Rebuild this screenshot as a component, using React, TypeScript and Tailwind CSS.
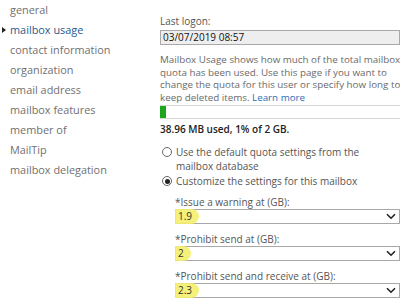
import React from 'react';

const NAV = [
  'general',
  'mailbox usage',
  'contact information',
  'organization',
  'email address',
  'mailbox features',
  'member of',
  'MailTip',
  'mailbox delegation',
];

const Chevron = () => (
  <svg width="10" height="7" viewBox="0 0 10 7" className="shrink-0">
    <path d="M1 1.2 L5 5.2 L9 1.2" fill="none" stroke="#222" strokeWidth="1.6" />
  </svg>
);

// boîte de sélection avec valeur surlignée
const QuotaSelect = ({ label, value }: { label: string; value: string }) => (
  <div>
    <div className="h-[13px] leading-[13px] text-[10px] text-[#555]">{label}</div>
    <div className="h-[15px] border border-[#a8a8a8] bg-white flex items-center pr-[3px]">
      <span className="relative ml-[1px] leading-[13px] text-[10px] text-[#333]">
        <span className="absolute -inset-y-[1px] -left-[2px] -right-[6px] rounded-r-full bg-[#f4ee6a] opacity-90" />
        <span className="relative px-[1px]">{value}</span>
      </span>
      <div className="flex-1" />
      <Chevron />
    </div>
  </div>
);

const Radio = ({ on }: { on?: boolean }) => (
  <span className="mt-[2.5px] w-[10px] h-[10px] rounded-full border border-[#666] flex items-center justify-center shrink-0">
    {on && <span className="w-[5px] h-[5px] rounded-full bg-[#222]" />}
  </span>
);

const INTRO = [
  'Mailbox Usage shows how much of the total mailbox',
  'quota has been used. Use this page if you want to',
  'change the quota for this user or specify how long to',
];

export default function App() {
  return (
    <div
      className="w-[400px] h-[302px] bg-white flex items-start overflow-hidden"
      style={{ fontFamily: '"Segoe UI", "Open Sans", "Noto Sans", sans-serif' }}
    >
      {/* navigation */}
      <div className="w-[160px] shrink-0">
        {NAV.map((n, i) => (
          <div key={n} className="h-[20px] flex items-center relative pl-[10px]">
            {i === 1 && (
              <span className="absolute left-[2px] top-[7px] w-0 h-0 border-y-[3px] border-y-transparent border-l-[4px] border-l-[#222]" />
            )}
            <span className={`text-[10.9px] ${i === 1 ? 'text-[#1d5a8f]' : 'text-[#707070]'}`}>{n}</span>
          </div>
        ))}
      </div>

      {/* contenu */}
      <div className="flex-1 min-w-0 pt-[15px]">
        <div className="h-[13px] leading-[13px] text-[10px] text-[#555]">Last logon:</div>
        <div className="mt-[2px] h-[15px] border border-[#a9a9a9] bg-[#eeeeee] flex items-center pl-[2px] text-[10px] text-[#111]">
          03/07/2019 08:57
        </div>

        <div className="mt-[9px] text-[9.8px] leading-[12.7px] text-[#6a6a6a] whitespace-nowrap">
          {INTRO.map((l) => (
            <div key={l}>{l}</div>
          ))}
          <div>
            keep deleted items. <span className="text-[#2a6db5]">Learn more</span>
          </div>
        </div>

        <div className="h-[14px] border-y border-[#d6d6d6] flex items-stretch">
          <div className="w-[6px] bg-[#1ea51e]" />
        </div>

        <div className="mt-[4px] h-[13px] leading-[13px] text-[10px] font-semibold text-[#222]">
          38.96 MB used, 1% of 2 GB.
        </div>

        <div className="mt-[9px] flex gap-[4px] pl-[2px]">
          <Radio />
          <div className="text-[10px] leading-[14.5px] text-[#555]">
            Use the default quota settings from the
            <br />
            mailbox database
          </div>
        </div>
        <div className="flex gap-[4px] pl-[2px]">
          <Radio on />
          <div className="text-[10px] leading-[14.5px] text-[#555]">Customize the settings for this mailbox</div>
        </div>

        <div className="mt-[8px] pl-[15px] flex flex-col gap-[9px]">
          <QuotaSelect label="*Issue a warning at (GB):" value="1.9" />
          <QuotaSelect label="*Prohibit send at (GB):" value="2" />
          <QuotaSelect label="*Prohibit send and receive at (GB):" value="2.3" />
        </div>
      </div>
    </div>
  );
}
